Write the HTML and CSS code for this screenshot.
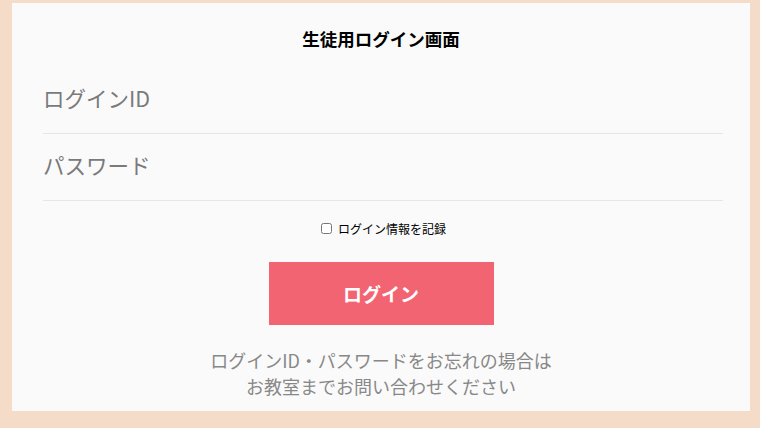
FILE: index.html
```html
<!DOCTYPE html>
<html lang="ja">
<head>
<meta charset="utf-8">
<link rel="stylesheet" href="styles.css">
</head>
<body>
<main class="card">
  <h1 class="title">生徒用ログイン画面</h1>
  <form class="form">
    <input class="field" type="text" placeholder="ログインID">
    <input class="field" type="password" placeholder="パスワード">
    <label class="remember"><input type="checkbox" class="check"><span>ログイン情報を記録</span></label>
    <button type="button" class="btn">ログイン</button>
  </form>
  <p class="note">ログインID・パスワードをお忘れの場合は<br>お教室までお問い合わせください</p>
</main>
</body>
</html>
```
FILE: styles.css
```css
html, body { margin: 0; padding: 0; }
body {
  background: #f5dcc8;
  padding: 3px 10px 17px 12px;
  font-family: "Noto Sans CJK JP", "Noto Sans", sans-serif;
  height: 428px;
  box-sizing: border-box;
}
.card {
  background: #fafafa;
  height: 408px;
  box-sizing: border-box;
  padding: 24px 31px 0 31px;
  display: flex;
  flex-direction: column;
}
.title {
  margin: 0 0 16px;
  font-size: 17.5px;
  line-height: 24px;
  font-weight: bold;
  text-align: center;
  color: #000;
}
.form { display: flex; flex-direction: column; align-items: center; }
.field {
  align-self: stretch;
  margin-right: -4px;
  height: 67px;
  box-sizing: border-box;
  border: none;
  border-bottom: 1px solid #e6e6e6;
  background: transparent;
  font-family: inherit;
  font-size: 21.5px;
  padding: 0 0 5px;
  outline: none;
}
.field::placeholder { color: #7a7a7a; }
.remember {
  display: flex;
  align-items: center;
  gap: 6px;
  font-size: 12px;
  color: #000;
  margin: 17px 0 0 5px;
  height: 20px;
}
.check { margin: 0; width: 11px; height: 11px; }
.btn {
  margin-top: 24px;
  width: 225px;
  height: 63px;
  border: none;
  background: #f26472;
  color: #fff;
  font-family: inherit;
  font-size: 19px;
  font-weight: bold;
}
.note {
  margin: 22px 0 0;
  text-align: center;
  font-size: 18px;
  line-height: 26px;
  color: #888;
}
```
